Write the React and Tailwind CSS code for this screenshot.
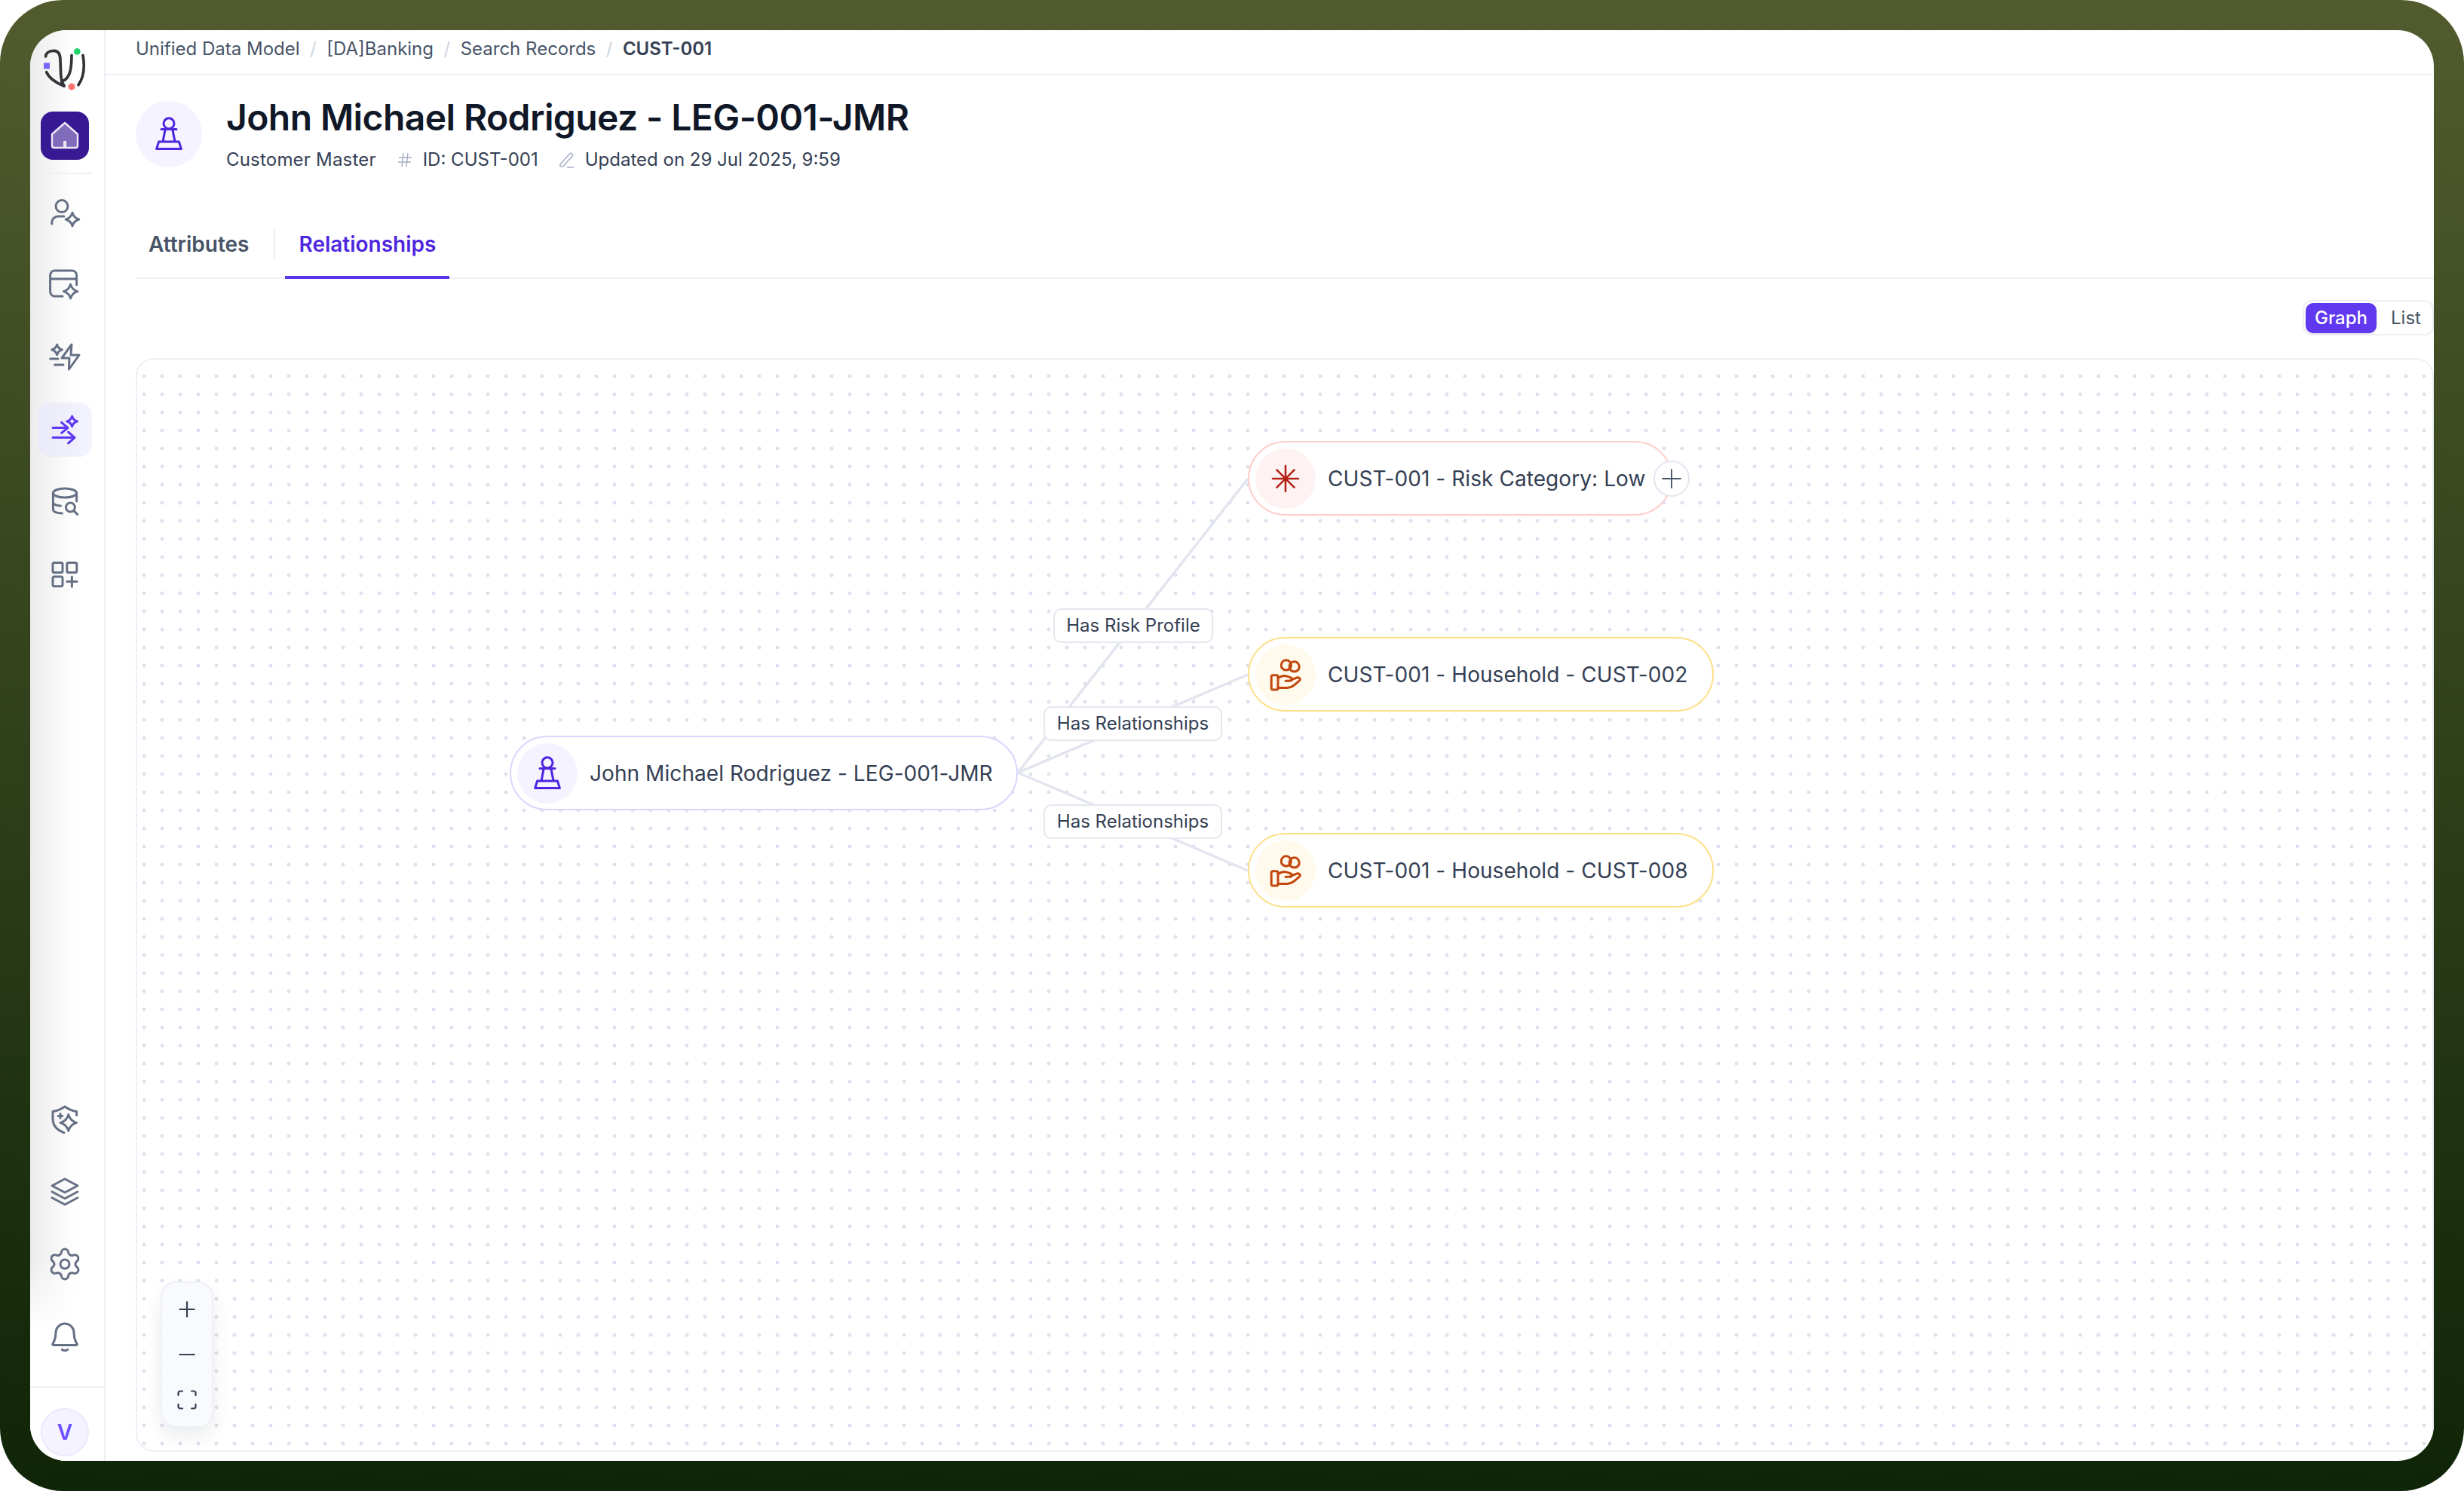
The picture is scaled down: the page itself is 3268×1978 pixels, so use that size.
import { Settings } from "lucide-react";

// four point star used by most of the sidebar icons
const star = (x, y, r) => {
  const k = r * 0.22;
  return `M${x} ${y - r}Q${x + k} ${y - k} ${x + r} ${y}Q${x + k} ${y + k} ${x} ${y + r}Q${x - k} ${y + k} ${x - r} ${y}Q${x - k} ${y - k} ${x} ${y - r}Z`;
};

function Icon({ children, className = "text-[#667085]", size = "size-12", width = 1.5 }) {
  return (
    <svg viewBox="0 0 24 24" fill="none" stroke="currentColor" strokeWidth={width} strokeLinecap="round" strokeLinejoin="round" className={`${size} ${className}`}>
      {children}
    </svg>
  );
}

function Logo() {
  return (
    <svg viewBox="78 96 180 180" className="size-[60px]" fill="none" stroke="#333338" strokeWidth="11" strokeLinecap="round">
      <path d="M92 135C92 118 110 112 125 112C145 112 150 130 150 150L152 205C153 225 158 240 165 252" />
      <path d="M95 197C105 220 135 240 165 252" />
      <path d="M155 235C185 225 195 195 195 130" />
      <path d="M240 130C247 170 245 215 222 248" />
      <circle cx="217" cy="115" r="13" fill="#22d36b" stroke="none" />
      <rect x="84" y="160" width="24" height="24" fill="#7767fb" stroke="none" />
      <polygon points="195,240 208,248 208,262 195,270 182,262 182,248" fill="#fb7272" stroke="none" />
    </svg>
  );
}

function Pawn() {
  return (
    <Icon className="text-[#4f26e0]">
      <circle cx="12" cy="4.9" r="3.5" />
      <path d="M7 8.700h10M9.600 8.700 8 17M14.400 8.700 16 17M5.300 17h13.400l1.500 4.800H3.800z" />
    </Icon>
  );
}

function HandCoins() {
  return (
    <Icon className="text-[#c2470f]">
      <g transform="translate(0.8 0)">
        <circle cx="11.6" cy="5.7" r="3.3" />
        <circle cx="17" cy="6.7" r="3.3" />
        <rect x="1.8" y="12.4" width="4.4" height="9.6" rx="1" />
        <path d="M6.200 14.200c2-1.200 4-1.800 5.500-1.300l3 1c1.200.4 1 2.200-.5 2.200h-3" />
        <path d="m14.600 15.600 4.200-1.600c1.600-.5 2.600 1 1.500 2.100l-3 2.600c-1.500 1.200-3 2-5 2H6.200" />
      </g>
    </Icon>
  );
}

function Asterisk() {
  return (
    <Icon className="text-[#b42318]" width={1.3}>
      <path d="M12 3.500v17M3.500 12h17M6.200 6.200l11.600 11.600M17.800 6.200 6.200 17.800" />
    </Icon>
  );
}

const railTop = [
  <Icon key="user">
    <circle cx="10" cy="8.8" r="4" />
    <path d="M3.400 20.500v-1a4 4 0 0 1 4-4h4" />
    <path d={star(17, 17.5, 4.4)} />
  </Icon>,
  <Icon key="panel">
    <path d="M10.500 20H5.300a3 3 0 0 1-3-3V6a3 3 0 0 1 3-3h11.500a3 3 0 0 1 3 3v6.500M2.300 8.500h17.500" />
    <path d={star(15.8, 16.8, 4.6)} />
  </Icon>,
  <Icon key="bolt">
    <path d={star(6.8, 7.5, 3.4)} />
    <path d="M2.300 13.500h5.200M5.300 17.500H11" />
    <path d="M16.500 4 10 13h5l-.3 7.500L21.500 11H16z" />
  </Icon>,
  <Icon key="flow" className="text-[#5f38f0]">
    <path d="M4 10.800h10M9.800 7.200l4.200 3.600-4.200 3.400M4 17.300h14.500M14.300 13.600l4.200 3.700-4.200 3.700" />
    <path d={star(16.8, 6.5, 3.4)} />
  </Icon>,
  <Icon key="db">
    <ellipse cx="12" cy="6" rx="7.800" ry="3" />
    <path d="M4.200 6v11c0 1.500 2.600 2.500 6 2.500M4.200 12.300c0 1.200 2.200 2.200 5 2.200M19.800 6v5.500" />
    <circle cx="15.700" cy="15.500" r="3" />
    <path d="m18 17.800 2.300 2.400" />
  </Icon>,
  <Icon key="apps">
    <rect x="4" y="3.800" width="6.500" height="6.400" rx="1" />
    <rect x="13.400" y="3.800" width="6.500" height="6.400" rx="1" />
    <rect x="4" y="13" width="6.500" height="6.400" rx="1" />
    <path d="M16.700 13v6.600M13.400 16.300H20" />
  </Icon>,
];

const railBottom = [
  <Icon key="shield">
    <path d="M11.500 20.800C7.500 19.400 4 16.500 4 11.500V6.700c2.600-.3 5.200-1.300 8-3.200 2.600 1.900 5.200 2.900 7.800 3.200v2.500" />
    <path d={star(14.4, 14.2, 5.4)} />
    <path d="M9 8.300v2.800M7.600 9.700h2.800" />
  </Icon>,
  <Icon key="layers">
    <path d="M12 3.500 20.500 8 12 12.500 3.500 8z" />
    <path d="m3.500 12 8.500 4.500 8.500-4.500M3.500 16l8.500 4.500 8.500-4.500" />
  </Icon>,
  <Settings key="gear" className="size-12 text-[#667085]" strokeWidth={1.5} />,
  <Icon key="bell">
    <path d="M12 3.500a6 6 0 0 0-6 6c0 3.800-1 5.800-2 7.300-.3.400 0 .900.400.900h15.200c.400 0 .700-.500.400-.900-1-1.500-2-3.500-2-7.300a6 6 0 0 0-6-6z" />
    <path d="M10.200 20.700c1 .700 2.600.700 3.600 0" />
  </Icon>,
];

function RailButton({ active, children }) {
  return (
    <div className={`flex size-[72px] items-center justify-center rounded-2xl ${active ? "bg-[linear-gradient(90deg,#eaeaf8,#f4f4ff)]" : ""}`}>
      {children}
    </div>
  );
}

function Sidebar() {
  return (
    <aside className="flex w-[100px] shrink-0 flex-col items-center border-r-2 border-[#eef0f6] bg-[linear-gradient(180deg,transparent_86%,#ffffff_91%),linear-gradient(90deg,#ececec,#ffffff_62%)] pt-[22px] pr-[6px] pb-[6px]">
      <Logo />
      <div className="mt-[26px] flex size-16 items-center justify-center rounded-2xl bg-[#371a93]">
        <svg viewBox="0 0 24 24" className="size-12" fill="#7f6cbb" stroke="#ece8f6" strokeWidth="1.2" strokeLinejoin="round">
          <path d="M12 3.500 20.500 11v7.600a1.400 1.400 0 0 1-1.400 1.400H4.900a1.400 1.400 0 0 1-1.400-1.400V11z" />
          <path d="M12 20v-4.500" strokeWidth="2" />
        </svg>
      </div>
      <div className="mt-[17px] h-0.5 w-[72px] bg-[#eef0f6]" />
      <div className="mt-[13px] flex flex-col gap-[24.5px]">
        {railTop.map((icon, i) => (
          <RailButton key={i} active={i === 3}>{icon}</RailButton>
        ))}
      </div>
      <div className="mt-auto flex flex-col gap-6">
        {railBottom.map((icon, i) => (
          <RailButton key={i}>{icon}</RailButton>
        ))}
      </div>
      <div className="mt-[30px] -mr-[6px] h-0.5 w-[98px] bg-[#eef0f6]" />
      <div className="mt-[27px] flex size-16 items-center justify-center rounded-full border-2 border-[#ebe9fe] bg-[#f4f3ff] text-[28px] font-semibold text-[#6d4dff]">
        V
      </div>
    </aside>
  );
}

function Breadcrumbs() {
  const crumbs = ["Unified Data Model", "[DA]Banking", "Search Records"];
  return (
    <div className="flex h-[60px] shrink-0 items-center border-b-2 border-[#eef0f6] pb-2 pl-10 text-2xl text-[#475467]">
      {crumbs.map((c) => (
        <span key={c} className="flex items-center">
          {c}
          <span className="mx-[13.5px] text-[#d0d5dd]">/</span>
        </span>
      ))}
      <span className="font-semibold text-[#344054]">CUST-001</span>
    </div>
  );
}

function Header() {
  return (
    <div className="flex items-start pt-[34px] pl-10">
      <div className="flex size-[88px] items-center justify-center rounded-full bg-[#f4f3ff]">
        <Pawn />
      </div>
      <div className="ml-8">
        <h1 className="text-5xl leading-[44px] font-semibold tracking-[-0.6px] text-[#101828]">John Michael Rodriguez - LEG-001-JMR</h1>
        <div className="mt-[18px] flex items-center text-2xl leading-8 text-[#344054]">
          <span className="tracking-[0.2px]">Customer Master</span>
          <svg viewBox="0 0 24 24" className="mr-3 ml-[26px] size-6 text-[#a4aec4]" fill="none" stroke="currentColor" strokeWidth="1.5">
            <path d="M4 9h17M3 15h17M10 3 8 21M16 3l-2 18" />
          </svg>
          <span>ID: CUST-001</span>
          <svg viewBox="0 0 24 24" className="mr-3 ml-[26px] size-6 text-[#a4aec4]" fill="none" stroke="currentColor" strokeWidth="1.5" strokeLinejoin="round">
            <path d="M3 18 16 3.500c1-1 4.500 1.500 3.500 3L7 20.500l-4 .5zM12 22h9" />
          </svg>
          <span>Updated on 29 Jul 2025, 9:59</span>
        </div>
      </div>
    </div>
  );
}

function Tabs() {
  return (
    <div className="mt-[52px] ml-10 flex h-[90px] shrink-0 items-center border-b-2 border-[#eef0f6] text-[28px] font-semibold">
      <div className="pr-[33px] pl-[17px] text-[#475467]">Attributes</div>
      <div className="h-10 w-0.5 bg-[#eef0f6]" />
      <div className="relative ml-[13px] flex h-full items-center px-[18px] text-[#4f26e0]">
        Relationships
        <div className="absolute right-0 -bottom-0.5 left-0 h-1 bg-[#5a36e8]" />
      </div>
    </div>
  );
}

function ViewToggle() {
  return (
    <div className="mt-[28px] flex shrink-0 justify-end">
      <div className="flex h-[47px] w-[174px] items-center rounded-xl border-2 border-[#eef0f6] p-0.5 text-2xl">
        <div className="flex h-10 w-[94px] items-center justify-center rounded-[10px] bg-[#5f38f0] font-medium text-white shadow-sm">Graph</div>
        <div className="flex-1 pl-1.5 text-center text-[#475467]">List</div>
      </div>
    </div>
  );
}

function Node({ className, icon, iconBg, border, children }) {
  return (
    <div className={`absolute flex h-[99px] items-center rounded-full border-2 bg-white pl-2 text-[28px] tracking-[0.07px] text-[#344054] ${border} ${className}`}>
      <div className={`flex size-20 shrink-0 items-center justify-center rounded-full ${iconBg}`}>{icon}</div>
      <span className="ml-4 whitespace-nowrap">{children}</span>
    </div>
  );
}

function EdgeLabel({ className, children }) {
  return (
    <div className={`absolute flex h-[46px] items-center justify-center rounded-[10px] border-2 border-[#e4e7ef] bg-white text-2xl text-[#344054] ${className}`}>
      {children}
    </div>
  );
}

function Canvas() {
  return (
    <div className="relative mt-[30px] mb-[12px] ml-10 flex-1 rounded-3xl border-2 border-[#eef0f6] bg-white bg-[radial-gradient(circle,#dfe2ee_2.2px,transparent_2.8px)] bg-[size:24px_24px] bg-[position:-3px_10px]">
      <svg className="absolute top-0 left-0 h-full w-full" fill="none" stroke="#e2e5ef" strokeWidth="3.5">
        <path d="M1168 548 1473 158" />
        <path d="M1168 548 1473 418" />
        <path d="M1168 548 1473 678" />
      </svg>

      <Node className="top-[499px] left-[494px] w-[674px]" icon={<Pawn />} iconBg="bg-[#f4f3ff]" border="border-[#d9d6fe]">
        John Michael Rodriguez - LEG-001-JMR
      </Node>
      <Node className="top-[108px] left-[1473px] w-[563px]" icon={<Asterisk />} iconBg="bg-[#fef3f2]" border="border-[#fecdca]">
        CUST-001 - Risk Category: Low
      </Node>
      <Node className="top-[368px] left-[1473px] w-[618px]" icon={<HandCoins />} iconBg="bg-[#fffaeb]" border="border-[#fedf89]">
        CUST-001 - Household - CUST-002
      </Node>
      <Node className="top-[628px] left-[1473px] w-[618px]" icon={<HandCoins />} iconBg="bg-[#fffaeb]" border="border-[#fedf89]">
        CUST-001 - Household - CUST-008
      </Node>

      <div className="absolute top-[134px] left-[2011px] flex size-12 items-center justify-center rounded-full border-2 border-[#e4e7ef] bg-white">
        <Icon size="size-8" width={1.4} className="text-[#475467]">
          <path d="M12 3v18M3 12h18" />
        </Icon>
      </div>

      <EdgeLabel className="top-[330px] left-[1215px] w-[212px]">Has Risk Profile</EdgeLabel>
      <EdgeLabel className="top-[460px] left-[1202px] w-[237px]">Has Relationships</EdgeLabel>
      <EdgeLabel className="top-[590px] left-[1202px] w-[237px]">Has Relationships</EdgeLabel>

      <div className="absolute bottom-[30px] left-[31px] flex h-[194px] w-[70px] flex-col items-center justify-between rounded-[20px] border-2 border-[#eef0f6] bg-[#f9fafd] pt-[23px] pb-[22px] shadow-[0_12px_24px_rgba(16,24,40,0.08)]">
        <svg viewBox="0 0 24 24" className="size-6 text-[#344054]" fill="none" stroke="currentColor" strokeWidth="2.2">
          <path d="M12 1.500v21M1.500 12h21" />
        </svg>
        <svg viewBox="0 0 24 24" className="size-6 text-[#344054]" fill="none" stroke="currentColor" strokeWidth="2.2">
          <path d="M1.500 12h21" />
        </svg>
        <svg viewBox="0 0 26 26" className="size-[26px] text-[#344054]" fill="none" stroke="currentColor" strokeWidth="2.2" strokeLinecap="round">
          <path d="M1.500 7V4a2.500 2.500 0 0 1 2.500-2.500h3M19 1.500h3A2.500 2.500 0 0 1 24.500 4v3M24.500 19v3a2.500 2.500 0 0 1-2.500 2.500h-3M7 24.500H4A2.500 2.500 0 0 1 1.500 22v-3" />
        </svg>
      </div>
    </div>
  );
}

export default function App() {
  return (
    <div className="h-[1978px] w-[3268px] overflow-hidden rounded-[84px] bg-[linear-gradient(180deg,#515b2e,#0f2507)] p-10 font-['Inter',sans-serif]">
      <div className="flex h-full overflow-hidden rounded-[48px] bg-white">
        <Sidebar />
        <main className="flex min-w-0 flex-1 flex-col">
          <Breadcrumbs />
          <Header />
          <Tabs />
          <ViewToggle />
          <Canvas />
        </main>
      </div>
    </div>
  );
}
